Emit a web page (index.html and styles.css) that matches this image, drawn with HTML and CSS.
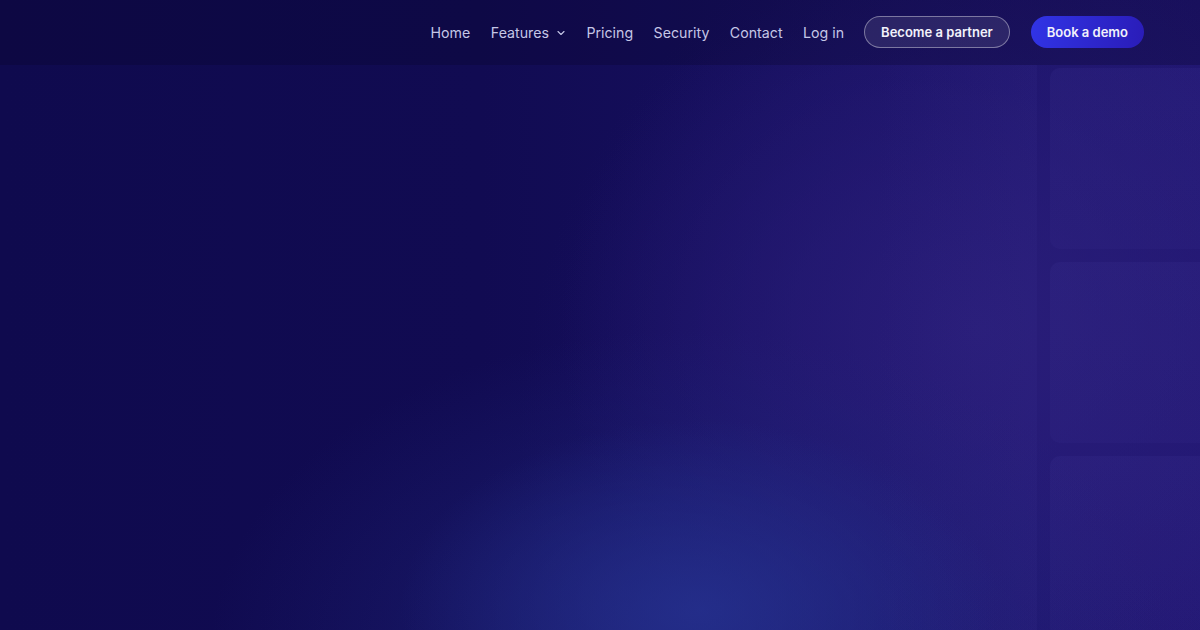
FILE: index.html
```html
<!DOCTYPE html>
<html lang="en">
<head>
    <meta charset="UTF-8">
    <meta name="viewport" content="width=device-width, initial-scale=1.0">
    <link rel="stylesheet" href="styles.css">
    <title>Book a demo</title>
</head>
<body>
    <div class="page">
        <header class="topbar">
            <nav class="nav">
                <a href="#" class="nav-link">Home</a>
                <a href="#" class="nav-link">Features
                    <svg class="chevron" width="10" height="10" viewBox="0 0 10 10" fill="none">
                        <path d="M2 3.5L5 6.5L8 3.5" stroke="currentColor" stroke-width="1.1" stroke-linecap="round" stroke-linejoin="round"/>
                    </svg>
                </a>
                <a href="#" class="nav-link">Pricing</a>
                <a href="#" class="nav-link">Security</a>
                <a href="#" class="nav-link">Contact</a>
                <a href="#" class="nav-link">Log in</a>
            </nav>
            <a href="#" class="btn btn-outline">Become a partner</a>
            <a href="#" class="btn btn-primary">Book a demo</a>
        </header>

        <main class="hero">
            <div class="hero-copy"></div>
            <div class="tiles">
                <div class="tile-strip"></div>
                <div class="tile-col">
                    <div class="tile"></div>
                    <div class="tile"></div>
                    <div class="tile"></div>
                </div>
            </div>
        </main>
    </div>
</body>
</html>
```

FILE: styles.css
```css
body {
    margin: 0;
    font-family: Inter, 'Noto Sans', sans-serif;
    background: #110b51;
    overflow: hidden;
}

.page {
    position: relative;
    height: 630px;
    overflow: hidden;
    background:
        radial-gradient(ellipse 300px 190px at 700px 610px, rgba(38, 50, 145, 0.75), rgba(38, 50, 145, 0) 100%),
        radial-gradient(ellipse 480px 320px at 690px 650px, rgba(31, 38, 125, 0.75), rgba(31, 38, 125, 0) 100%),
        radial-gradient(ellipse 420px 380px at 980px 330px, rgba(42, 30, 122, 0.9), rgba(42, 30, 122, 0) 100%),
        radial-gradient(ellipse 560px 560px at 1080px 430px, rgba(34, 23, 116, 0.85), rgba(34, 23, 116, 0) 100%),
        linear-gradient(90deg, #0f0a4e 0%, #110b52 40%, #171060 70%, #1f1570 100%);
}

/* top navigation */
.topbar {
    display: flex;
    align-items: center;
    justify-content: flex-end;
    height: 65px;
    padding: 0 56px 2px 0;
    box-sizing: border-box;
    background: rgba(8, 4, 40, 0.26);
    position: relative;
    z-index: 2;
}

.nav {
    display: flex;
    align-items: center;
    gap: 20.5px;
    margin-right: 20px;
}

.nav-link {
    color: #c5c6e6;
    text-decoration: none;
    font-size: 14.2px;
    display: flex;
    align-items: center;
    gap: 7px;
    padding-top: 2px;
}

.chevron {
    margin-top: 1px;
}

.btn {
    display: inline-flex;
    align-items: center;
    height: 32px;
    padding: 0 16px;
    border-radius: 16px;
    font-size: 13px;
    font-weight: 600;
    color: #f2f2fb;
    text-decoration: none;
    box-sizing: border-box;
}

.btn-outline {
    border: 1px solid rgba(255, 255, 255, 0.38);
    background: rgba(255, 255, 255, 0.09);
    margin-right: 21px;
}

.btn-primary {
    background: linear-gradient(100deg, #3134e6, #2a1cb8);
}

/* hero */
.hero {
    display: flex;
    justify-content: space-between;
    height: calc(630px - 65px);
}

.tiles {
    display: flex;
    gap: 13px;
    margin-right: -130px;
    padding-top: 3px;
}

.tile-strip {
    width: 160px;
    margin-top: -3px;
    background: linear-gradient(90deg, rgba(70, 60, 160, 0), rgba(70, 60, 160, 0.07) 70%, rgba(70, 60, 160, 0.1));
}

.tile-col {
    display: flex;
    flex-direction: column;
    gap: 13px;
    width: 280px;
}

.tile {
    height: 181px;
    flex: none;
    border-radius: 10px;
    background: linear-gradient(180deg, rgba(70, 60, 160, 0.14), rgba(70, 60, 160, 0.09));
}
```
